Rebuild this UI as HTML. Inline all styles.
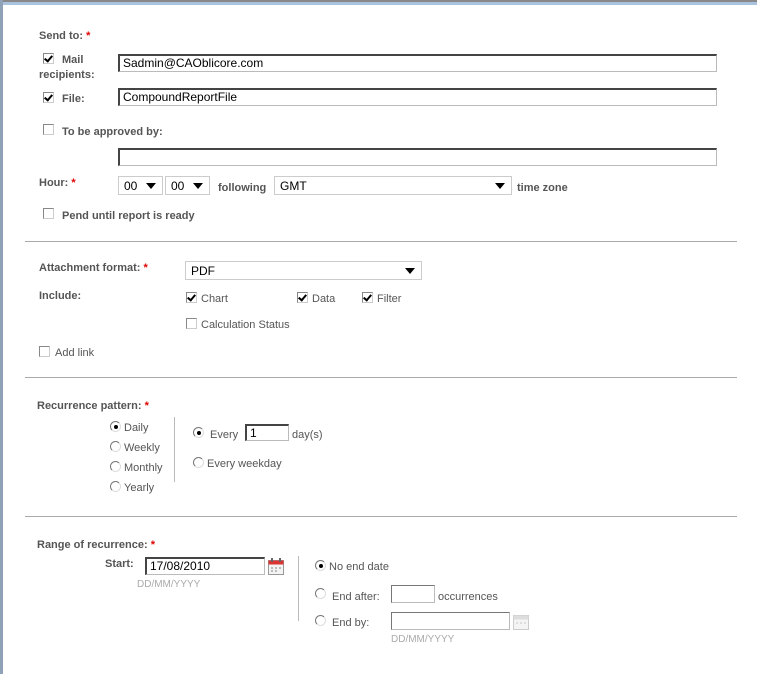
<!DOCTYPE html>
<html><head><meta charset="utf-8"><style>
body{margin:0;width:757px;height:674px;background:#fff;position:relative;overflow:hidden;font-family:"Liberation Sans",sans-serif;font-size:11px;color:#555}
.a{position:absolute;line-height:14px;white-space:nowrap;transform:translateY(1px)}
.b{font-weight:bold}
.r{color:#e00000}
.inp{position:absolute;box-sizing:border-box;border:1px solid #bbb;border-top:2px solid #444;border-left:2px solid #444;background:#fff;font-size:12px;color:#000;padding-left:3px;line-height:15px}
.sel{position:absolute;box-sizing:border-box;border:1px solid #ccc;background:#fff;font-size:12px;color:#000;padding-left:5px;line-height:18px}
.sel:after{content:"";position:absolute;right:6px;top:6px;border-left:5px solid transparent;border-right:5px solid transparent;border-top:6px solid #000}
.cb{position:absolute;width:11px;height:11px;box-sizing:border-box;border:1px solid #888;border-right-color:#ccc;border-bottom-color:#ccc;background:#fff}
.cb.c:after{content:"";position:absolute;left:2px;top:0px;width:3px;height:6px;border:solid #000;border-width:0 2px 2px 0;transform:rotate(40deg)}
.rd{position:absolute;width:11px;height:11px;box-sizing:border-box;border-radius:50%;border:1px solid #777;border-right-color:#ddd;border-bottom-color:#ddd;background:#fff}
.rd.c:after{content:"";position:absolute;left:2.5px;top:2.5px;width:4px;height:4px;border-radius:50%;background:#000}
.hr{position:absolute;left:25px;width:712px;height:1px;background:#aaa}
.vr{position:absolute;width:1px;background:#bbb}
.g{color:#aaa;font-size:10px}
</style></head><body>
<div style="position:absolute;left:0;top:0;width:757px;height:2px;background:#888"></div>
<div style="position:absolute;left:0;top:2px;width:757px;height:3px;background:#a9c3de"></div>
<div style="position:absolute;left:0;top:0;width:3px;height:674px;background:#8fa2b8"></div>

<div class="a b" style="left:39px;top:28px">Send to: <span class="r">*</span></div>
<div class="cb c" style="left:43px;top:53px"></div>
<div class="a b" style="left:62px;top:52px">Mail</div>
<div class="a b" style="left:39px;top:67px">recipients:</div>
<div class="inp" style="left:118px;top:54px;width:599px;height:18px">Sadmin@CAOblicore.com</div>
<div class="cb c" style="left:43px;top:92px"></div>
<div class="a b" style="left:62px;top:91px">File:</div>
<div class="inp" style="left:118px;top:88px;width:599px;height:18px">CompoundReportFile</div>
<div class="cb" style="left:43px;top:124px"></div>
<div class="a b" style="left:62px;top:124px">To be approved by:</div>
<div class="inp" style="left:118px;top:148px;width:599px;height:18px"></div>
<div class="a b" style="left:39px;top:175px">Hour: <span class="r">*</span></div>
<div class="sel" style="left:118px;top:176px;width:45px;height:19px">00</div>
<div class="sel" style="left:165px;top:176px;width:45px;height:19px">00</div>
<div class="a b" style="left:218px;top:180px">following</div>
<div class="sel" style="left:274px;top:176px;width:238px;height:19px">GMT</div>
<div class="a b" style="left:517px;top:180px">time zone</div>
<div class="cb" style="left:43px;top:208px"></div>
<div class="a b" style="left:62px;top:208px">Pend until report is ready</div>

<div class="hr" style="top:241px"></div>

<div class="a b" style="left:39px;top:260px">Attachment format: <span class="r">*</span></div>
<div class="sel" style="left:185px;top:261px;width:237px;height:19px">PDF</div>
<div class="a b" style="left:39px;top:288px">Include:</div>
<div class="cb c" style="left:186px;top:292px"></div><div class="a" style="left:201px;top:291px">Chart</div>
<div class="cb c" style="left:297px;top:292px"></div><div class="a" style="left:312px;top:291px">Data</div>
<div class="cb c" style="left:362px;top:292px"></div><div class="a" style="left:377px;top:291px">Filter</div>
<div class="cb" style="left:186px;top:318px"></div><div class="a" style="left:201px;top:317px">Calculation Status</div>
<div class="cb" style="left:39px;top:346px"></div><div class="a" style="left:55px;top:345px">Add link</div>

<div class="hr" style="top:377px"></div>

<div class="a b" style="left:37px;top:398px">Recurrence pattern: <span class="r">*</span></div>
<div class="rd c" style="left:110px;top:421px"></div><div class="a" style="left:124px;top:420px">Daily</div>
<div class="rd" style="left:110px;top:441px"></div><div class="a" style="left:124px;top:440px">Weekly</div>
<div class="rd" style="left:110px;top:461px"></div><div class="a" style="left:124px;top:460px">Monthly</div>
<div class="rd" style="left:110px;top:481px"></div><div class="a" style="left:124px;top:480px">Yearly</div>
<div class="vr" style="left:174px;top:417px;height:65px"></div>
<div class="rd c" style="left:193px;top:427px"></div><div class="a" style="left:210px;top:427px">Every</div>
<div class="inp" style="left:245px;top:424px;width:44px;height:17px">1</div>
<div class="a" style="left:292px;top:427px">day(s)</div>
<div class="rd" style="left:193px;top:457px"></div><div class="a" style="left:207px;top:456px">Every weekday</div>

<div class="hr" style="top:516px"></div>

<div class="a b" style="left:37px;top:537px">Range of recurrence: <span class="r">*</span></div>
<div class="a b" style="left:105px;top:556px">Start:</div>
<div class="inp" style="left:145px;top:557px;width:120px;height:18px">17/08/2010</div>
<svg style="position:absolute;left:268px;top:558px" width="16" height="17"><rect x="0.5" y="2.5" width="15" height="14" fill="#f4f4f4" stroke="#999"/><rect x="0.5" y="2.5" width="15" height="4" fill="#d33"/><rect x="3" y="0" width="2" height="4" fill="#666"/><rect x="11" y="0" width="2" height="4" fill="#666"/><g fill="#bbb"><rect x="3" y="9" width="2" height="2"/><rect x="7" y="9" width="2" height="2"/><rect x="11" y="9" width="2" height="2"/><rect x="3" y="12" width="2" height="2"/><rect x="7" y="12" width="2" height="2"/></g></svg>
<div class="a g" style="left:137px;top:577px">DD/MM/YYYY</div>
<div class="vr" style="left:298px;top:556px;height:65px"></div>
<div class="rd c" style="left:315px;top:560px"></div><div class="a" style="left:329px;top:559px">No end date</div>
<div class="rd" style="left:315px;top:588px"></div><div class="a" style="left:332px;top:589px">End after:</div>
<div class="inp" style="left:391px;top:585px;width:44px;height:18px;border-color:#bbb;border-top:1px solid #777;border-left:1px solid #777"></div>
<div class="a" style="left:438px;top:589px">occurrences</div>
<div class="rd" style="left:315px;top:615px"></div><div class="a" style="left:332px;top:615px">End by:</div>
<div class="inp" style="left:391px;top:612px;width:119px;height:18px;border-color:#bbb;border-top:1px solid #777;border-left:1px solid #777"></div>
<svg style="position:absolute;left:513px;top:613px" width="16" height="17"><rect x="0.5" y="2.5" width="15" height="14" fill="#f4f4f4" stroke="#ccc"/><rect x="0.5" y="2.5" width="15" height="4" fill="#ddd"/><g fill="#ddd"><rect x="3" y="9" width="2" height="2"/><rect x="7" y="9" width="2" height="2"/><rect x="11" y="9" width="2" height="2"/></g></svg>
<div class="a g" style="left:391px;top:632px">DD/MM/YYYY</div>
</body></html>
